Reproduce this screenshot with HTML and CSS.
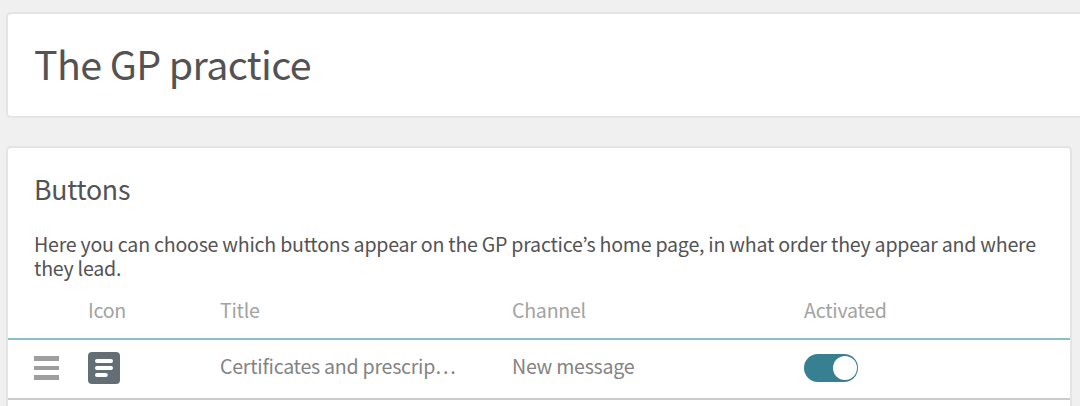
FILE: index.html
```
<!DOCTYPE html>
<html lang="en">
    <head>
        <meta charset="utf-8">
        <title>The GP practice</title>
        <link rel="stylesheet" href="styles.css">
    </head>
    <body>
        <div class="card page-header">
            <h1>The GP practice</h1>
        </div>

        <div class="card buttons">
            <h2>Buttons</h2>
            <p class="intro">Here you can choose which buttons appear on the GP practice’s home page, in what order they appear and where they lead.</p>

            <div class="row head">
                <div></div>
                <div><span>Icon</span></div>
                <div><span>Title</span></div>
                <div><span>Channel</span></div>
                <div><span>Activated</span></div>
            </div>
            <div class="row">
                <div class="handle">
                    <i></i>
                    <i></i>
                    <i></i>
                </div>
                <div>
                    <svg class="icon" width="32" height="32" viewBox="0 0 32 32">
                        <rect width="32" height="32" rx="4" fill="#646e75"/>
                        <path d="M9 9H23M9 16H23M9 23H17.8" fill="none" stroke="#fff" stroke-width="4" stroke-linecap="round"/>
                    </svg>
                </div>
                <div class="text"><span>Certificates and prescrip…</span></div>
                <div class="text"><span>New message</span></div>
                <div><div class="toggle"></div></div>
            </div>
        </div>
    </body>
</html>
```
FILE: styles.css
```
body{
    box-sizing: border-box;
    height: 406px;
    background-color: #f0f0f0;
    margin: 0;
    padding: 12px 0 0 6px;
    font-family: "Noto Sans CJK KR", "Noto Sans CJK JP", sans-serif;
    color: #535353;
    overflow: hidden;
}
.card{
    box-sizing: border-box;
    background-color: white;
    border: 2px solid #e4e4e4;
    border-radius: 5px;
}
.page-header{
    height: 106px;
    margin-bottom: 28px;
    padding: 19px 26px;
    border-right: 0;
    border-radius: 5px 0 0 5px;
}
h1{
    margin: 0;
    font-size: 39.4px;
    line-height: 60px;
    font-weight: 400;
    letter-spacing: -0.0155em;
}
.buttons{
    width: 1066px;
    height: 260px;
    padding-top: 21px;
    border-bottom: 0;
    border-radius: 5px 5px 0 0;
}
h2{
    margin: 0 26px;
    font-size: 26.7px;
    line-height: 40px;
    font-weight: 400;
    letter-spacing: -0.009em;
}
.intro{
    margin: 23px 26px 0;
    font-size: 19.6px;
    line-height: 24px;
    letter-spacing: -0.0125em;
}
.row{
    display: grid;
    grid-template-columns: 54px 132px 292px 292px 1fr;
    align-items: center;
    height: 56px;
    padding: 0 0 2px 26px;
    border-bottom: 2px solid #ccc;
    font-size: 19.6px;
    line-height: 24px;
    letter-spacing: -0.0135em;
    color: #838383;
}
.head{
    height: 54px;
    padding-top: 3px;
    padding-bottom: 1px;
    border-bottom-color: #8bc0c8;
    color: #a3a3a3;
}
.handle{
    display: flex;
    flex-direction: column;
    gap: 5px;
}
.handle i{
    width: 25px;
    height: 4.5px;
    background-color: #9e9e9e;
}
.icon{
    display: block;
}
.text{
    padding-bottom: 4px;
}
.toggle{
    box-sizing: border-box;
    display: flex;
    justify-content: flex-end;
    width: 54px;
    height: 28px;
    padding: 2px 1px;
    border-radius: 14px;
    background-color: #368092;
}
.toggle::after{
    content: "";
    width: 24px;
    height: 24px;
    border-radius: 50%;
    background-color: white;
}
```
